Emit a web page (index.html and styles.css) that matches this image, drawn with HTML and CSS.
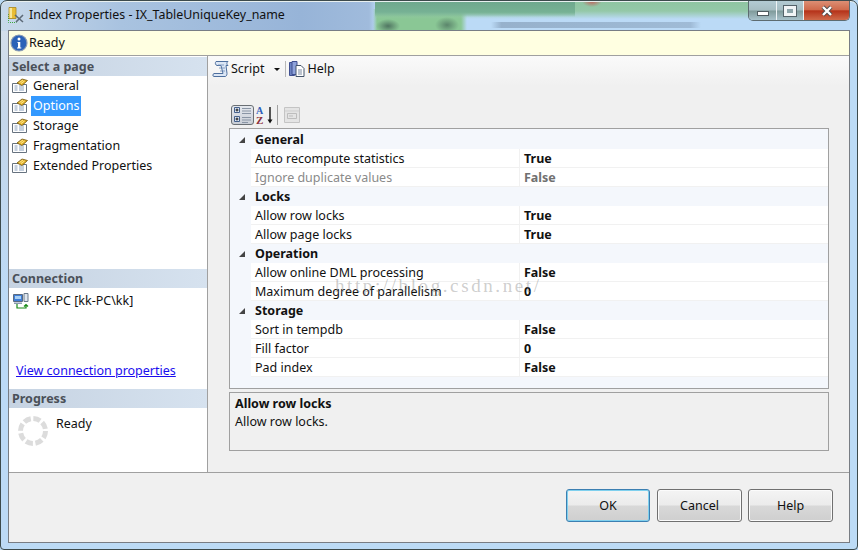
FILE: index.html
```html
<!DOCTYPE html>
<html lang="en">
<head>
<meta charset="utf-8">
<title>Index Properties</title>
<link rel="stylesheet" href="styles.css">
</head>
<body>
<svg class="defs" width="0" height="0">
  <defs>
    <symbol id="page" viewBox="0 0 16 16">
      <path d="M.5 5.500h7l3 1h4v8H.5z" fill="#fff" stroke="#66727f"/>
      <path d="M2.500 8h3M7 8h5M2.500 10h3M7 10h5M2.500 12h3M7 12h5" stroke="#8aa0bc"/>
      <path d="M5 5l5-4 5.500 1.500L10 7.500z" fill="#e6b42a" stroke="#6f5410" stroke-width=".8"/>
      <path d="M7.500 4.500l3.500-2.500M9 5.500l3.500-2.500" stroke="#fff2b0" stroke-width=".8"/>
    </symbol>
  </defs>
</svg>
<div class="window">
  <header class="titlebar">
    <svg class="title-icon" width="16" height="16" viewBox="0 0 16 16">
      <path d="M0.500 7v8.500h8" fill="none" stroke="#3da83d" stroke-dasharray="1 1"/>
      <path d="M1 0.500h7v11H1z" fill="#e9bd35" stroke="#a8861c" stroke-width=".8"/>
      <path d="M1.500 1h2.500v10H1.500z" fill="#f8e79a"/>
      <path d="M7 8l8 7M15 8l-7 7" stroke="#5d6a78" stroke-width="1.600"/>
    </svg>
    <span class="title-text">Index Properties - IX_TableUniqueKey_name</span>
    <div class="caption">
      <span class="cap cap-min"><i></i></span>
      <span class="cap cap-max"><i></i></span>
      <span class="cap cap-close">
        <svg width="14" height="12" viewBox="0 0 14 12"><path d="M3 2l8 8M11 2l-8 8" stroke="#4a4a4a" stroke-width="4"/><path d="M3 2l8 8M11 2l-8 8" stroke="#fff" stroke-width="2.400"/></svg>
      </span>
    </div>
  </header>
  <div class="client">
    <div class="infobar">
      <svg width="18" height="18" viewBox="0 0 18 18">
        <circle cx="9" cy="9" r="8" fill="#2a62b8" stroke="#8c9cb4" stroke-width="1.200"/>
        <circle cx="9" cy="5" r="1.500" fill="#fff"/>
        <path d="M7.500 8h2.800v5.500h1v1H7v-1h1V9h-.5z" fill="#fff"/>
      </svg>
      <span>Ready</span>
    </div>
    <div class="body">
      <aside class="side">
        <h2 class="side-head">Select a page</h2>
        <ul class="pages">
          <li class="page"><svg class="pg" width="16" height="16"><use href="#page"/></svg><span class="page-label">General</span></li>
          <li class="page"><svg class="pg" width="16" height="16"><use href="#page"/></svg><span class="page-label is-selected">Options</span></li>
          <li class="page"><svg class="pg" width="16" height="16"><use href="#page"/></svg><span class="page-label">Storage</span></li>
          <li class="page"><svg class="pg" width="16" height="16"><use href="#page"/></svg><span class="page-label">Fragmentation</span></li>
          <li class="page"><svg class="pg" width="16" height="16"><use href="#page"/></svg><span class="page-label">Extended Properties</span></li>
        </ul>
        <h2 class="side-head">Connection</h2>
        <div class="conn">
          <div class="conn-row">
            <svg width="16" height="16" viewBox="0 0 16 16">
              <path d="M0.500 1.500h9v7h-9z" fill="#3f7fd8" stroke="#5a6a80"/>
              <path d="M2 3h6v3H2z" fill="#a9d0f5"/>
              <path d="M11 .5h4v8h-4z" fill="#dfe6ee" stroke="#6a7a8c"/>
              <path d="M1 9.500h8v1.500H1z" fill="#8a9bb0"/>
              <path d="M4 11v4h9v-3M11 13.500l2-2 2 2" fill="none" stroke="#178a17" stroke-width="1.200"/>
            </svg>
            <span>KK-PC [kk-PC\kk]</span>
          </div>
          <a class="conn-link" href="#">View connection properties</a>
        </div>
        <h2 class="side-head">Progress</h2>
        <div class="progress">
          <svg width="30" height="30" viewBox="0 0 30 30">
            <circle cx="15" cy="15" r="12.500" fill="none" stroke="#dcdcdc" stroke-width="5" stroke-dasharray="7.200 2.616"/>
          </svg>
          <span>Ready</span>
        </div>
      </aside>
      <main class="main">
        <div class="toolbar">
          <svg width="18" height="18" viewBox="0 0 18 18">
            <path d="M4 1.500h12c-1.500 1-1.500 3 0 4l-2 0 1 8c0 2-1 3-2 3H2c-1.500 0-1.500-2.500 0-3h9L9 5.500H5C3 5 3 2.500 4 1.500z" fill="#dbe6f5" stroke="#4e6f9e"/>
            <path d="M6 5h6M7 8h6M8 11h5" stroke="#6f8bb5" stroke-width=".8"/>
          </svg>
          <span class="tb-label">Script</span>
          <span class="tb-caret"></span>
          <span class="tb-sep"></span>
          <svg width="18" height="18" viewBox="0 0 18 18">
            <path d="M1.500 2.500h5v13h-5z" fill="#6d83c2" stroke="#3f4f90"/>
            <path d="M4 1.500h5v13H4z" fill="#8ea2da" stroke="#3f4f90"/>
            <path d="M8 5.500h5l3 3v8H8z" fill="#fff" stroke="#44546a"/>
            <path d="M10 10h4M10 12h4M10 14h4" stroke="#7a8aa0"/>
          </svg>
          <span class="tb-label">Help</span>
        </div>
        <div class="grid-tools">
          <span class="gt-btn">
            <svg width="20" height="18" viewBox="0 0 20 18">
              <path d="M1.500 1.500h5v5h-5zM1.500 10.500h5v5h-5z" fill="#dfe8f5" stroke="#45618c"/>
              <path d="M2.500 4h3M4 2.500v3M2.500 13h3M4 11.500v3" stroke="#111"/>
              <path d="M9 2.500h9M9 5h9M9 7.500h9M9 11.500h9M9 14h9M9 16.500h6" stroke="#8a95a5"/>
            </svg>
          </span>
          <svg class="az" width="18" height="20" viewBox="0 0 18 20">
            <text x="0" y="9" class="az-a">A</text>
            <text x="0" y="19" class="az-z">Z</text>
            <path d="M14 2v14" stroke="#111" stroke-width="1.400"/>
            <path d="M11.500 14.500L14 18.500l2.500-4z" fill="#111"/>
          </svg>
          <span class="gt-sep"></span>
          <svg width="16" height="16" viewBox="0 0 16 16">
            <path d="M.5 .5h15v15H.5z" fill="#e4e4e4" stroke="#c4c4c4"/>
            <path d="M1 4h14" stroke="#cfcfcf"/>
            <path d="M3.500 6.500h9v5h-9zM5 9h4" fill="none" stroke="#bdbdbd"/>
          </svg>
        </div>
        <div class="grid">
          <div class="row row-cat"><span class="tri"></span><span>General</span></div>
          <div class="row"><span class="name">Auto recompute statistics</span><span class="val">True</span></div>
          <div class="row is-disabled"><span class="name">Ignore duplicate values</span><span class="val">False</span></div>
          <div class="row row-cat"><span class="tri"></span><span>Locks</span></div>
          <div class="row"><span class="name">Allow row locks</span><span class="val">True</span></div>
          <div class="row"><span class="name">Allow page locks</span><span class="val">True</span></div>
          <div class="row row-cat"><span class="tri"></span><span>Operation</span></div>
          <div class="row"><span class="name">Allow online DML processing</span><span class="val">False</span></div>
          <div class="row"><span class="name">Maximum degree of parallelism</span><span class="val">0</span></div>
          <div class="row row-cat"><span class="tri"></span><span>Storage</span></div>
          <div class="row"><span class="name">Sort in tempdb</span><span class="val">False</span></div>
          <div class="row"><span class="name">Fill factor</span><span class="val">0</span></div>
          <div class="row"><span class="name">Pad index</span><span class="val">False</span></div>
          <div class="watermark">http://blog.csdn.net/</div>
        </div>
        <div class="desc">
          <strong>Allow row locks</strong>
          <span>Allow row locks.</span>
        </div>
      </main>
    </div>
    <footer class="footer">
      <button class="btn btn-default" type="button">OK</button>
      <button class="btn" type="button">Cancel</button>
      <button class="btn" type="button">Help</button>
    </footer>
  </div>
</div>
</body>
</html>
```
FILE: styles.css
```css
* { box-sizing: border-box; }
html, body { margin: 0; padding: 0; width: 858px; height: 550px; overflow: hidden; background: #b9d9f4; }
body { font-family: "Noto Sans", "Open Sans", sans-serif; font-size: 12.5px; color: #111; }
.defs { position: absolute; }
ul { list-style: none; margin: 0; padding: 0; }
h2 { margin: 0; }

.window {
  width: 858px; height: 550px;
  display: flex; flex-direction: column;
  padding: 0 7px 6px;
  border: 1px solid #3c4a4c;
  border-radius: 7px 7px 4px 4px;
  box-shadow: inset 0 1px 0 #e8f0f0;
  background:
    radial-gradient(ellipse 10px 6px at 591px 0, #c0605c 0, rgba(192,96,92,0) 100%),
    radial-gradient(ellipse 12px 7px at 387px 25px, rgba(60,90,80,.75) 0, rgba(60,90,80,0) 100%),
    radial-gradient(ellipse 12px 8px at 446px 24px, rgba(60,90,80,.6) 0, rgba(60,90,80,0) 100%),
    linear-gradient(90deg, rgba(95,115,140,0) 0, rgba(95,115,140,.4) 5%, rgba(95,115,140,.3) 95%, rgba(95,115,140,0) 100%) 490px 21px / 210px 6px no-repeat,
    linear-gradient(180deg, #6fa88e 0, #76b194 10px, rgba(118,177,148,0) 15px) 374px 1px / 200px 20px no-repeat,
    linear-gradient(180deg, #8fc4a2 0, #94c8a8 9px, rgba(148,200,168,0) 17px) 374px 1px / 376px 22px no-repeat,
    linear-gradient(90deg, rgba(137,198,149,0) 0, #8ac795 4px, #8ac795 88px, rgba(138,199,149,0) 94px) 372px 8px / 94px 21px no-repeat,
    linear-gradient(90deg, #c8d9ea 0, #a9c3e0 120px, #97b4d8 300px, #a0bbdc 368px, #bbdaf6 376px) 0 0 / 100% 30px no-repeat,
    linear-gradient(180deg, #d8e2ec 0, #c5d7ea 120px, #bcdaf6 300px) 0 0 / 8px 100% no-repeat,
    #bcdbf6;
}
.titlebar { height: 29px; display: flex; align-items: flex-start; flex: none; }
.title-icon { margin: 6px 0 0 0; flex: none; }
.title-text { margin: 4px 0 0 5px; font-size: 12.4px; line-height: 20px; color: #111; }
.caption { margin-left: auto; display: flex; height: 20px; border: 1px solid #5d6b70; border-top: 0; border-radius: 0 0 5px 5px; overflow: hidden; }
.cap { display: flex; align-items: center; justify-content: center; background: linear-gradient(180deg, #b3cbd3 0, #a6bdc2 48%, #7f9a9a 52%, #a8c2cb 100%); }
.cap + .cap { border-left: 1px solid #eef3f5; }
.cap-min { width: 27px; }
.cap-min i { display: block; width: 12px; height: 5px; margin-top: 6px; background: #fff; border: 1px solid #4f5a5f; }
.cap-max { width: 27px; }
.cap-max i { display: block; width: 12px; height: 10px; border: 3px solid #f2f5f6; outline: 1px solid #55636a; background: #8ea5aa; }
.cap-close { width: 46px; background: linear-gradient(180deg, #dc8f74 0, #cf6a4c 46%, #b5321a 52%, #cf6a4a 100%); }

.client { flex: 1; display: flex; flex-direction: column; border: 1px solid #787d84; background: #f0f0f0; min-height: 0; }
.infobar { height: 25px; flex: none; display: flex; align-items: center; gap: 1px; padding-left: 1px; background: #ffffe1; border-bottom: 1px solid #a0a0a0; line-height: 20px; }

.body { flex: 1; display: flex; min-height: 0; border-bottom: 1px solid #a0a0a0; }
.side { width: 199px; flex: none; display: flex; flex-direction: column; background: #fff; border-right: 1px solid #a0a0a0; }
.side-head { height: 19px; flex: none; padding-left: 3px; margin-top: 1px; font-size: 12.5px; font-weight: 700; line-height: 19px; color: #4a5058; background: linear-gradient(90deg, #c6d3e2 0, #d6e2ef 100%); }
.pages { height: 192px; flex: none; }
.page { height: 20px; display: flex; align-items: center; padding-left: 3px; gap: 3px; }
.pg { flex: none; }
.page-label { padding: 0 2px; line-height: 20px; }
.page-label.is-selected { background: #3399ff; color: #fff; }

.conn { height: 100px; flex: none; display: flex; flex-direction: column; padding: 3px 0 0 4px; }
.conn-row { display: flex; align-items: center; gap: 7px; line-height: 20px; }
.conn-link { margin: auto 0 8px 3px; color: #1a0dee; line-height: 18px; }

.progress { flex: 1; display: flex; align-items: flex-start; gap: 8px; padding: 8px 0 0 9px; }
.progress span { line-height: 20px; margin-top: -2px; }

.main { flex: 1; display: flex; flex-direction: column; padding: 0 20px 21px 21px; background: linear-gradient(180deg, #fafafa 0, #f0f0f0 30px); min-width: 0; }
.toolbar { height: 26px; flex: none; display: flex; align-items: center; margin: 0 -19px; padding-left: 2px; }
.tb-label { margin-left: 1px; line-height: 20px; }
.tb-caret { width: 0; height: 0; margin-left: 10px; border: 3px solid transparent; border-top: 3px solid #111; border-bottom: 0; }
.tb-sep { width: 1px; height: 16px; margin: 0 2px 0 5px; background: #b8b8b8; }

.grid-tools { height: 24px; margin-top: 21px; flex: none; display: flex; align-items: center; margin-left: 2px; }
.gt-btn { width: 23px; height: 20px; display: flex; align-items: center; justify-content: center; border: 1px solid #6a6f74; border-radius: 3px; background: linear-gradient(180deg, #e4e8ee, #c9ced6); }
.az { margin-left: 2px; }
.az-a { font-family: "Liberation Serif", serif; font-size: 10px; font-weight: 700; fill: #2c5cb8; }
.az-z { font-family: "Liberation Serif", serif; font-size: 11px; font-weight: 700; fill: #8c2f3a; }
.gt-sep { width: 1px; height: 20px; margin: 0 6px 0 3px; background: #a0a0a0; }

.grid { position: relative; height: 261px; flex: none; margin-top: 1px; padding-top: 1px; border: 1px solid #a0a0a0; background: #f4f7fc; overflow: hidden; }
.row { height: 19px; display: flex; margin-left: 21px; background: #fff; border-bottom: 1px solid #f1f1f1; line-height: 19px; }
.name { width: 269px; flex: none; padding-left: 4px; border-right: 1px solid #f1f1f1; }
.val { padding-left: 4px; font-weight: 700; }
.is-disabled .name { color: #8a8a8a; }
.is-disabled .val { color: #707070; }
.row-cat { margin-left: 0; background: #f4f7fc; border-bottom: 0; font-weight: 700; align-items: center; }
.tri { width: 25px; flex: none; height: 6px; position: relative; }
.tri::before { content: ""; position: absolute; left: 9px; top: 0; width: 0; height: 0; border-style: solid; border-width: 0 0 6px 6px; border-color: transparent transparent #444 transparent; }
.watermark { position: absolute; left: 105px; top: 146px; font-family: "Liberation Serif", serif; font-size: 19px; letter-spacing: 2.600px; color: rgba(130,130,130,.4); white-space: nowrap; pointer-events: none; }

.desc { height: 59px; flex: none; margin-top: 3px; padding: 2px 5px; display: flex; flex-direction: column; border: 1px solid #a0a0a0; background: #f0f0f0; line-height: 18px; }

.footer { height: 69px; flex: none; display: flex; justify-content: flex-end; align-items: flex-start; gap: 6px; padding: 16px 16px 0 0; }
.btn { width: 85px; height: 33px; font: inherit; color: #111; border: 1px solid #707070; border-radius: 3px; background: linear-gradient(180deg, #f4f4f4 0, #ebebeb 48%, #d8d8d8 52%, #cfcfcf 100%); box-shadow: inset 0 0 0 1px #fbfbfb; padding: 0; }
.btn-default { width: 84px; border-color: #3c7fb1; box-shadow: inset 0 0 0 1px #7fd0ee; margin-right: 1px; }
```
